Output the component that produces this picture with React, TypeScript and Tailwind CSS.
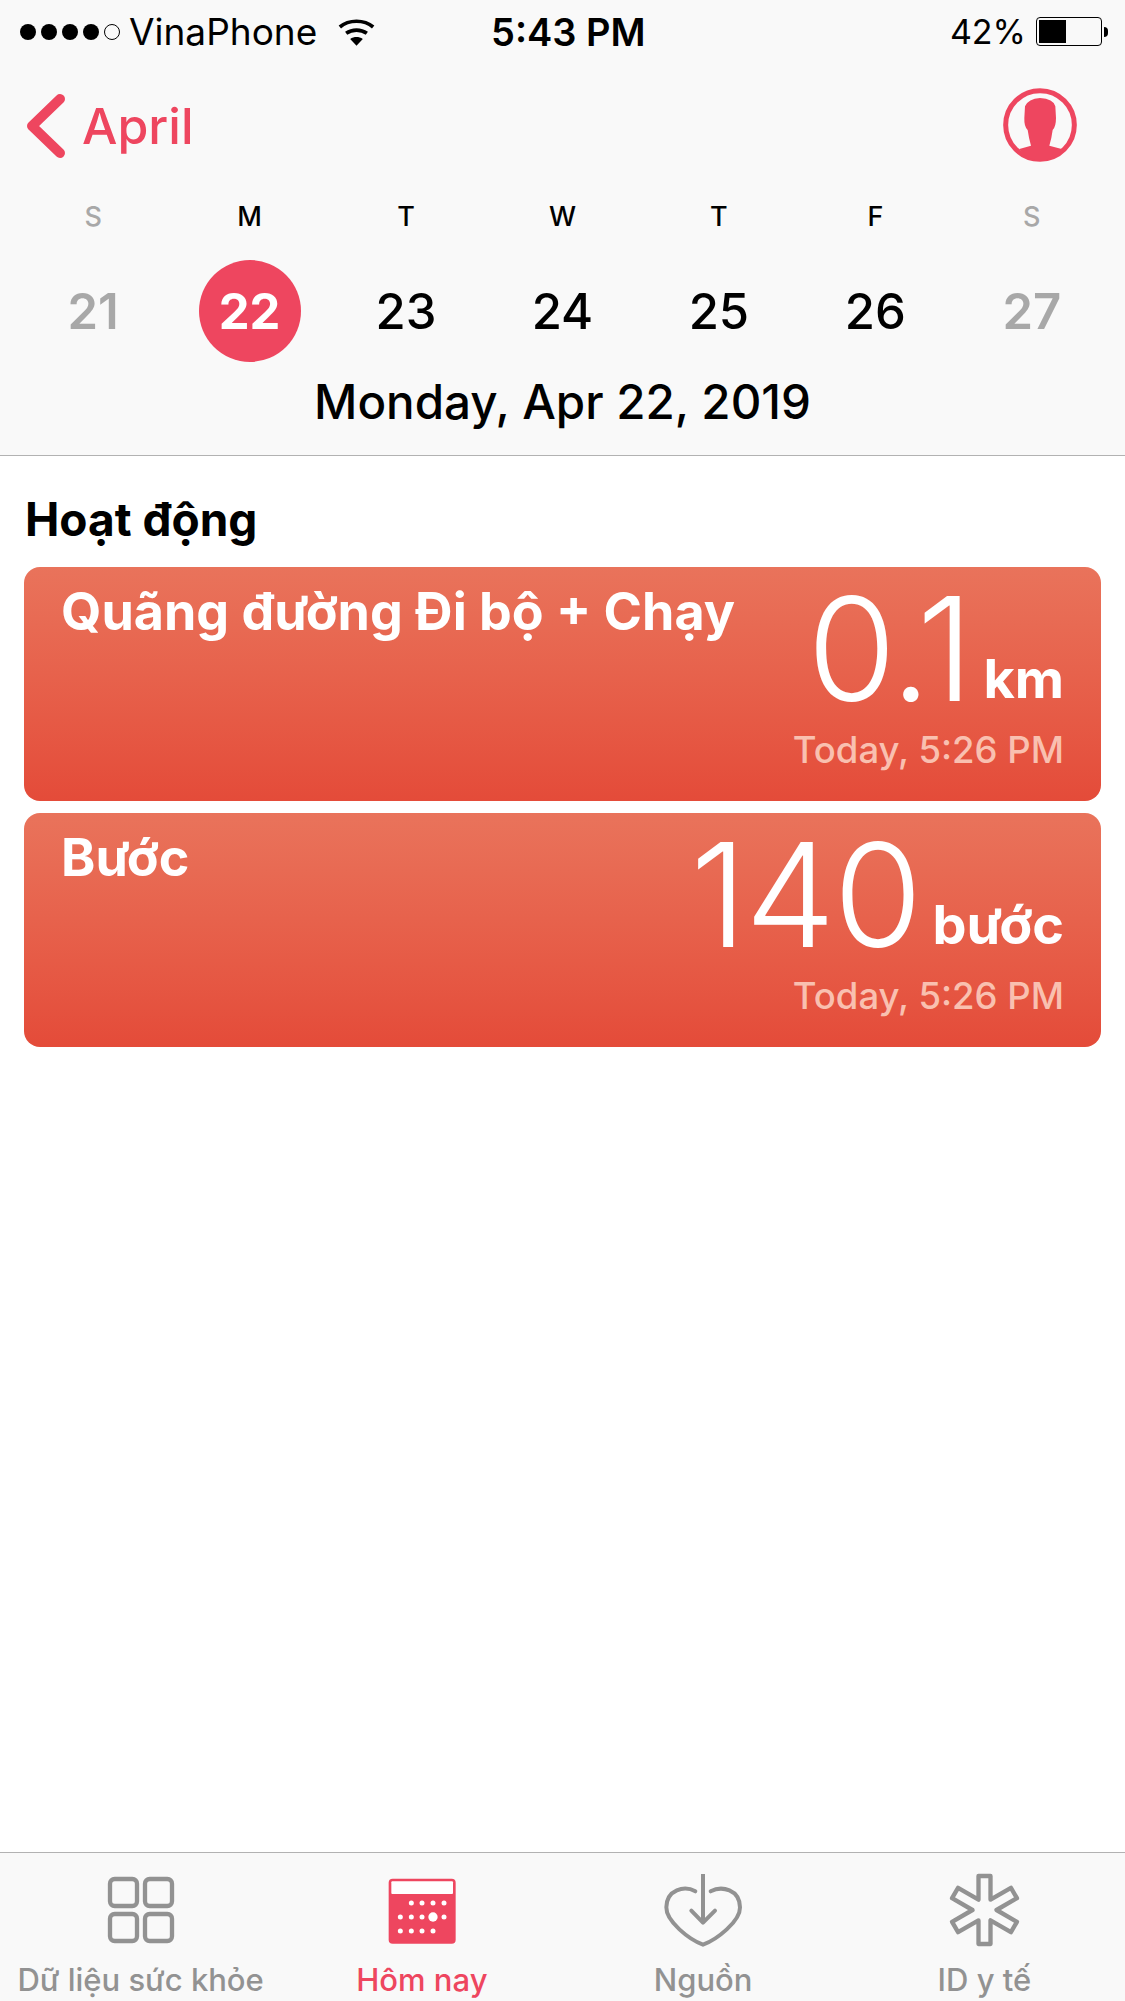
const font = { fontFamily: "Inter, 'Noto Sans', sans-serif" }

const days = [
  { letter: "S", date: "21", muted: true },
  { letter: "M", date: "22", selected: true },
  { letter: "T", date: "23" },
  { letter: "W", date: "24" },
  { letter: "T", date: "25" },
  { letter: "F", date: "26" },
  { letter: "S", date: "27", muted: true },
]

function WifiIcon() {
  return (
    <svg viewBox="1005 32 116 84" className="h-[28px] w-[39px]" fill="none" stroke="black" strokeWidth="11">
      <path d="M1013 59 C1040 36 1086 36 1113 59" />
      <path d="M1032 78 C1050 65 1076 65 1094 78" />
      <path d="M1044 95 C1056 87 1070 87 1082 95 L1063 115 Z" fill="black" stroke="none" />
    </svg>
  )
}

function Battery() {
  return (
    <div className="flex items-center">
      <div className="h-[29px] w-[66px] rounded-[4px] border border-black p-[2px]">
        <div className="h-full w-[27px] bg-black" />
      </div>
      <div className="ml-[2px] h-[10px] w-[4px] rounded-r-full bg-black" />
    </div>
  )
}

function StatusBar() {
  return (
    <div className="relative flex h-[63px] items-center justify-between pl-[20px] pr-[17px] text-black">
      <div className="flex items-center">
        <div className="flex gap-[5px]">
          {[0, 1, 2, 3].map((i) => (
            <span key={i} className="size-[16px] rounded-full bg-black" />
          ))}
          <span className="size-[16px] rounded-full border border-black" />
        </div>
        <span className="ml-[9px] text-[37px] leading-[60px]">VinaPhone</span>
        <span className="ml-[20px]">
          <WifiIcon />
        </span>
      </div>
      <span className="absolute left-[491px] text-[38px] font-semibold leading-[60px]">5:43 PM</span>
      <div className="flex items-center gap-[10px]">
        <span className="text-[34px] leading-[60px]">42%</span>
        <Battery />
      </div>
    </div>
  )
}

function Avatar() {
  return (
    <svg viewBox="130 260 220 222" className="mb-[2px] size-[74px]">
      <circle cx="240" cy="371" r="103" fill="none" stroke="#ee465f" strokeWidth="15" />
      <path
        fill="#ee465f"
        d="M178 443 L213 433 Q206 408 203 386 Q192 376 193 350 L195 315 Q205 292 240 290 Q280 292 286 315 L288 350 Q288 376 278 386 Q275 410 268 433 L305 443 Q280 476 240 478 Q200 476 178 443 Z"
      />
    </svg>
  )
}

function NavBar() {
  return (
    <div className="flex h-[126px] items-center justify-between pl-[26px] pr-[48px]">
      <div className="flex items-center gap-[16px]">
        <svg viewBox="0 0 40 64" className="h-[64px] w-[40px]" fill="none" stroke="#ee465f" strokeWidth="10" strokeLinecap="round" strokeLinejoin="round">
          <path d="M34 5 L6 32 L34 59" />
        </svg>
        <span className="text-[50px] font-medium leading-none text-[#ee465f]">April</span>
      </div>
      <Avatar />
    </div>
  )
}

function WeekStrip() {
  return (
    <div className="mt-[10px] grid grid-cols-7 px-[15px]">
      {days.map((d) => (
        <div key={d.date} className="flex flex-col items-center">
          <span className={`h-[36px] text-[27px] font-medium leading-[36px] ${d.muted ? "text-[#a8a8a8]" : "text-black"}`}>
            {d.letter}
          </span>
          <span
            className={`mt-[25px] flex size-[102px] items-center justify-center rounded-full text-[49px] leading-none ${
              d.selected
                ? "bg-[#ee465f] font-bold text-white"
                : d.muted
                  ? "font-semibold text-[#a8a8a8]"
                  : "font-medium text-black"
            }`}
          >
            {d.date}
          </span>
        </div>
      ))}
    </div>
  )
}

function MetricCard({ title, value, unit }: { title: string; value: string; unit: string }) {
  return (
    <div className="flex h-[234px] justify-between rounded-[16px] bg-gradient-to-b from-[#e9735b] to-[#e44b39] pl-[37px] pr-[37px] text-white">
      <div className="pt-[15px] text-[52px] font-bold leading-[60px]">{title}</div>
      <div className="flex flex-col items-end">
        <div className="flex h-[154px] items-end">
          <span className="text-[144px] font-light leading-[144px] tracking-[-2px]">{value}</span>
          <span className="mb-[12px] ml-[12px] text-[54px] font-bold leading-[60px]">{unit}</span>
        </div>
        <div className="mt-[7px] text-[36.5px] font-medium leading-[44px] text-[#f9c0b0]">Today, 5:26 PM</div>
      </div>
    </div>
  )
}

function GridIcon() {
  const spots = [
    [61, 43],
    [166, 43],
    [61, 148],
    [166, 148],
  ]
  return (
    <svg viewBox="49 22 210 228" className="h-[76px] w-[70px]" fill="none" stroke="#929292" strokeWidth="13">
      {spots.map(([x, y]) => (
        <rect key={`${x}-${y}`} x={x} y={y} width="81" height="81" rx="14" />
      ))}
    </svg>
  )
}

function CalendarIcon() {
  const rows = [
    { y: 115, xs: [965, 997, 1030, 1063] },
    { y: 157, xs: [932, 965, 997, 1063] },
    { y: 199, xs: [932, 965, 997, 1030] },
  ]
  return (
    <svg viewBox="892 22 210 228" className="h-[76px] w-[70px]">
      <rect x="897" y="42" width="201" height="195" rx="12" fill="#ee465f" />
      <rect x="905" y="50" width="185" height="38" rx="3" fill="white" />
      {rows.map((row) =>
        row.xs.map((x) => <circle key={`${x}-${row.y}`} cx={x} cy={row.y} r="7.5" fill="white" />),
      )}
      <circle cx="1030" cy="157" r="14" fill="white" />
    </svg>
  )
}

function SourcesIcon() {
  return (
    <svg viewBox="65 22 252 228" className="h-[76px] w-[84px]" fill="none" stroke="#929292" strokeWidth="12" strokeLinejoin="round" strokeLinecap="round">
      <path d="M168 80 C135 62 82 75 81 128 C80 170 150 225 191 240 C232 225 303 170 302 128 C301 75 248 62 214 80" />
      <path d="M191 28 L191 172" strokeLinecap="butt" />
      <path d="M156 138 L191 174 L227 138" />
    </svg>
  )
}

function MedicalIcon() {
  const cx = 112
  const cy = 114
  const a = 18
  const len = 102
  // six arms, walked clockwise: two tip corners, then the notch before the next arm
  const points = [90, 30, -30, -90, -150, 150].flatMap((deg) => {
    const t = (deg * Math.PI) / 180
    const dx = Math.cos(t)
    const dy = -Math.sin(t)
    const nx = -dy
    const ny = dx
    const notch = ((deg - 30) * Math.PI) / 180
    return [
      [cx + len * dx - a * nx, cy + len * dy - a * ny],
      [cx + len * dx + a * nx, cy + len * dy + a * ny],
      [cx + 2 * a * Math.cos(notch), cy - 2 * a * Math.sin(notch)],
    ]
  })
  return (
    <svg viewBox="0 0 224 228" className="h-[76px] w-[75px]" fill="none" stroke="#929292" strokeWidth="13" strokeLinejoin="round">
      <polygon points={points.map((p) => p.join(",")).join(" ")} />
    </svg>
  )
}

const tabs = [
  { label: "Dữ liệu sức khỏe", icon: <GridIcon /> },
  { label: "Hôm nay", icon: <CalendarIcon />, active: true },
  { label: "Nguồn", icon: <SourcesIcon /> },
  { label: "ID y tế", icon: <MedicalIcon /> },
]

function TabBar() {
  return (
    <div className="grid h-[149px] grid-cols-4 border-t border-[#b2b2b2] bg-[#f9f9f9]">
      {tabs.map((t) => (
        <div key={t.label} className="flex flex-col items-center pt-[19px]">
          <div className="flex h-[76px] items-center justify-center">{t.icon}</div>
          <span className={`mt-[12px] whitespace-nowrap text-[31px] font-medium leading-[40px] ${t.active ? "text-[#ee465f]" : "text-[#929292]"}`}>
            {t.label}
          </span>
        </div>
      ))}
    </div>
  )
}

export default function App() {
  return (
    <div className="flex h-[2001px] w-[1125px] flex-col overflow-hidden bg-white" style={font}>
      <header className="h-[456px] shrink-0 border-b border-[#b2b2b2] bg-[#f9f9f9]">
        <StatusBar />
        <NavBar />
        <WeekStrip />
        <div className="mt-[10px] text-center text-[47.5px] font-medium leading-[60px] text-black">Monday, Apr 22, 2019</div>
      </header>
      <main className="flex-1 px-[24px]">
        <h2 className="mt-[38px] pl-[1px] text-[46px] font-bold leading-[50px] text-black">Hoạt động</h2>
        <div className="mt-[23px] flex flex-col gap-[12px]">
          <MetricCard title="Quãng đường Đi bộ + Chạy" value="0.1" unit="km" />
          <MetricCard title="Bước" value="140" unit="bước" />
        </div>
      </main>
      <TabBar />
    </div>
  )
}
